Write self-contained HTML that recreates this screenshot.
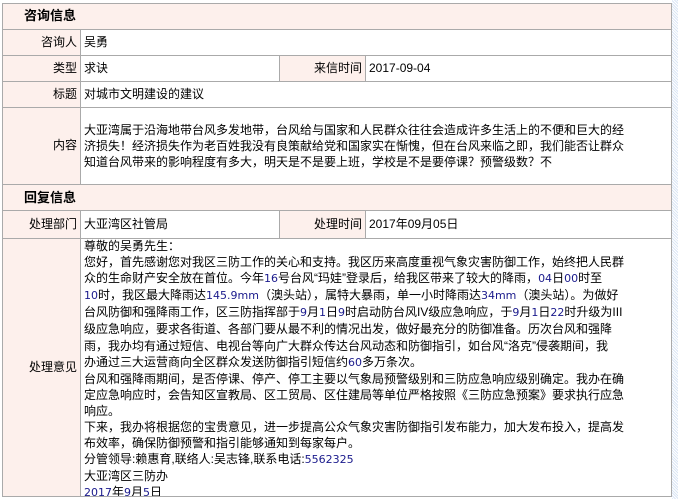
<!DOCTYPE html>
<html><head><meta charset="utf-8"><style>
body{margin:0;width:678px;height:499px;background:#fff;overflow:hidden;position:relative;font-family:"Liberation Sans","WenQuanYi Zen Hei","Noto Sans CJK SC",sans-serif;font-size:12px;color:#000}
.c{position:absolute;box-sizing:border-box;overflow:hidden;white-space:nowrap}
.h{background:#fdf0ec;font-weight:bold;font-size:13px;padding-left:22px}
.l{background:#fdf0ec;text-align:right;padding-right:3px}
.v{padding-left:3px}
.n{color:#1a1a8c;font-family:"DejaVu Sans","Liberation Sans",sans-serif;font-size:11px}
.q{font-family:"WenQuanYi Zen Hei",sans-serif}
.sb{position:absolute;left:672px;top:0;width:6px;height:499px;background:repeating-linear-gradient(45deg,#dbe6f5 0 1px,#fff 1px 2px)}
.hl{position:absolute;left:2px;width:670px;height:1px;background:#aaa}
.vl{position:absolute;width:1px;background:#aaa}
</style></head><body>
<div class="sb"></div>
<div class="c h" style="left:2px;top:3px;width:670px;height:26px;line-height:26px">咨询信息</div>
<div class="c l" style="left:2px;top:29px;width:78px;height:26px;line-height:26px">咨询人</div>
<div class="c v" style="left:81px;top:29px;width:590px;height:26px;line-height:26px">吴勇</div>
<div class="c l" style="left:2px;top:55px;width:78px;height:26px;line-height:26px">类型</div>
<div class="c v" style="left:81px;top:55px;width:198px;height:26px;line-height:26px">求诀</div>
<div class="c l" style="left:280px;top:55px;width:85px;height:26px;line-height:26px">来信时间</div>
<div class="c v" style="left:366px;top:55px;width:305px;height:26px;line-height:26px">2017-09-04</div>
<div class="c l" style="left:2px;top:81px;width:78px;height:26px;line-height:26px">标题</div>
<div class="c v" style="left:81px;top:81px;width:590px;height:26px;line-height:26px">对城市文明建设的建议</div>
<div class="c l" style="left:2px;top:107px;width:78px;height:77px;line-height:77px">内容</div>
<div class="c v" style="left:81px;top:107px;width:590px;height:77px;padding-top:15px;line-height:16px">大亚湾属于沿海地带台风多发地带，台风给与国家和人民群众往往会造成许多生活上的不便和巨大的经<br>济损失！经济损失作为老百姓我没有良策献给党和国家实在惭愧，但在台风来临之即，我们能否让群众<br>知道台风带来的影响程度有多大，明天是不是要上班，学校是不是要停课？预警级数？不</div>
<div class="c h" style="left:2px;top:184px;width:670px;height:26px;line-height:28px">回复信息</div>
<div class="c l" style="left:2px;top:210px;width:78px;height:28px;line-height:28px">处理部门</div>
<div class="c v" style="left:81px;top:210px;width:198px;height:28px;line-height:28px">大亚湾区社管局</div>
<div class="c l" style="left:280px;top:210px;width:85px;height:28px;line-height:28px">处理时间</div>
<div class="c v" style="left:366px;top:210px;width:305px;height:28px;line-height:28px">2017年09月05日</div>
<div class="c l" style="left:2px;top:238px;width:78px;height:258px;line-height:258px">处理意见</div>
<div class="c v" style="left:81px;top:238px;width:590px;height:258px;line-height:16.1px">尊敬的吴勇先生：<br>您好，首先感谢您对我区三防工作的关心和支持。我区历来高度重视气象灾害防御工作，始终把人民群<br>众的生命财产安全放在首位。今年<span class="n">16</span>号台风<span class="q">“</span>玛娃<span class="q">”</span>登录后，给我区带来了较大的降雨，<span class="n">04</span>日<span class="n">00</span>时至<br><span class="n">10</span>时，我区最大降雨达<span class="n">145.9mm</span>（澳头站），属特大暴雨，单一小时降雨达<span class="n">34mm</span>（澳头站）。为做好<br>台风防御和强降雨工作，区三防指挥部于<span class="n">9</span>月<span class="n">1</span>日<span class="n">9</span>时启动防台风IV级应急响应，于<span class="n">9</span>月<span class="n">1</span>日<span class="n">22</span>时升级为III<br>级应急响应，要求各街道、各部门要从最不利的情况出发，做好最充分的防御准备。历次台风和强降<br>雨，我办均有通过短信、电视台等向广大群众传达台风动态和防御指引，如台风<span class="q">“</span>洛克<span class="q">”</span>侵袭期间，我<br>办通过三大运营商向全区群众发送防御指引短信约<span class="n">60</span>多万条次。<br>台风和强降雨期间，是否停课、停产、停工主要以气象局预警级别和三防应急响应级别确定。我办在确<br>定应急响应时，会告知区宣教局、区工贸局、区住建局等单位严格按照《三防应急预案》要求执行应急<br>响应。<br>下来，我办将根据您的宝贵意见，进一步提高公众气象灾害防御指引发布能力，加大发布投入，提高发<br>布效率，确保防御预警和指引能够通知到每家每户。<br>分管领导:赖惠育,联络人:吴志锋,联系电话:<span class="n">5562325</span><br>大亚湾区三防办<br><span class="n">2017</span>年<span class="n">9</span>月<span class="n">5</span>日</div>
<div class="hl" style="top:3px"></div>
<div class="hl" style="top:29px"></div>
<div class="hl" style="top:55px"></div>
<div class="hl" style="top:81px"></div>
<div class="hl" style="top:107px"></div>
<div class="hl" style="top:184px"></div>
<div class="hl" style="top:210px"></div>
<div class="hl" style="top:238px"></div>
<div class="hl" style="top:496px"></div>
<div class="vl" style="left:2px;top:3px;height:494px"></div>
<div class="vl" style="left:671px;top:3px;height:494px"></div>
<div class="vl" style="left:80px;top:29px;height:155px"></div>
<div class="vl" style="left:80px;top:210px;height:286px"></div>
<div class="vl" style="left:279px;top:55px;height:26px"></div>
<div class="vl" style="left:365px;top:55px;height:26px"></div>
<div class="vl" style="left:279px;top:210px;height:28px"></div>
<div class="vl" style="left:365px;top:210px;height:28px"></div>
</body></html>
